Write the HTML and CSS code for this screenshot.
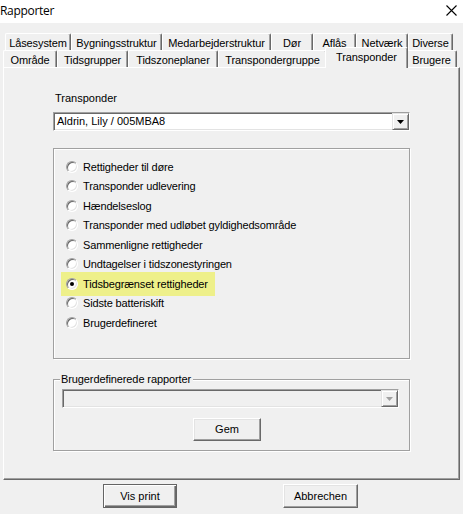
FILE: index.html
```html
<!DOCTYPE html>
<html lang="da">
<head>
<meta charset="utf-8">
<title>Rapporter</title>
<link rel="stylesheet" href="styles.css">
</head>
<body>
<div class="window">
  <div class="titlebar">
    <span class="title">Rapporter</span>
    <svg class="close" width="11" height="11" viewBox="0 0 11 11"><path d="M0.5 0.5 L10.5 10.5 M10.5 0.5 L0.5 10.5" stroke="#000" stroke-width="1.1" fill="none"/></svg>
  </div>
  <div class="tabs">
    <div class="tabrow row1">
      <div class="tab">Låsesystem</div>
      <div class="tab">Bygningsstruktur</div>
      <div class="tab">Medarbejderstruktur</div>
      <div class="tab">Dør</div>
      <div class="tab">Aflås</div>
      <div class="tab">Netværk</div>
      <div class="tab">Diverse</div>
    </div>
    <div class="tabrow row2">
      <div class="tab">Område</div>
      <div class="tab">Tidsgrupper</div>
      <div class="tab">Tidszoneplaner</div>
      <div class="tab">Transpondergruppe</div>
      <div class="tab active">Transponder</div>
      <div class="tab">Brugere</div>
    </div>
  </div>
  <div class="panel">
    <div class="label">Transponder</div>
    <div class="combo">
      <span class="combo-text">Aldrin, Lily / 005MBA8</span>
      <span class="combo-btn"><svg width="7" height="4" viewBox="0 0 7 4"><polygon points="0,0 7,0 3.5,4" fill="#000"/></svg></span>
    </div>
    <div class="group radios">
      <div class="radio-row"><span class="radio"></span><span>Rettigheder til døre</span></div>
      <div class="radio-row"><span class="radio"></span><span>Transponder udlevering</span></div>
      <div class="radio-row"><span class="radio"></span><span>Hændelseslog</span></div>
      <div class="radio-row"><span class="radio"></span><span>Transponder med udløbet gyldighedsområde</span></div>
      <div class="radio-row"><span class="radio"></span><span>Sammenligne rettigheder</span></div>
      <div class="radio-row"><span class="radio"></span><span>Undtagelser i tidszonestyringen</span></div>
      <div class="radio-row hl"><span class="radio"><span class="dot"></span></span><span>Tidsbegrænset rettigheder</span></div>
      <div class="radio-row"><span class="radio"></span><span>Sidste batteriskift</span></div>
      <div class="radio-row"><span class="radio"></span><span>Brugerdefineret</span></div>
    </div>
    <div class="group group2">
      <div class="legend">Brugerdefinerede rapporter</div>
      <div class="combo disabled">
        <span class="combo-text"></span>
        <span class="combo-btn"><svg width="7" height="4" viewBox="0 0 7 4"><polygon points="0,0 7,0 3.5,4" fill="#a0a0a0"/></svg></span>
      </div>
      <div class="btn gem">Gem</div>
    </div>
  </div>
  <div class="footer">
    <div class="btn default vis">Vis print</div>
    <div class="btn abb">Abbrechen</div>
  </div>
</div>
</body>
</html>
```
FILE: styles.css
```css
html, body {
  margin: 0;
  padding: 0;
}
body {
  background: #f0f0f0;
  font-family: "Liberation Sans", Arial, sans-serif;
  font-size: 11px;
  color: #000;
}
.window {
  width: 463px;
  height: 514px;
  overflow: hidden;
  display: flex;
  flex-direction: column;
}
.titlebar {
  height: 23px;
  background: #fff;
  display: flex;
  align-items: center;
  justify-content: space-between;
  padding: 0 6px 0 0;
  box-sizing: border-box;
  flex: none;
}
.title {
  font-family: "Open Sans", "Noto Sans", sans-serif;
  font-size: 12px;
  letter-spacing: -0.3px;
  line-height: 16px;
  margin-top: -2px;
}
.close {
  display: block;
  margin-top: -2px;
}
.tabs {
  margin-top: 10px;
  flex: none;
}
.tabrow {
  display: grid;
  height: 17px;
}
.row1 {
  padding-left: 5px;
  grid-template-columns: 66px 91px 109px 42px 43px 52px 45px;
}
.row2 {
  padding-left: 3px;
  grid-template-columns: 54px 71px 90px 109px 79px 51px;
}
.tab {
  box-sizing: border-box;
  height: 17px;
  display: flex;
  align-items: center;
  justify-content: center;
  white-space: nowrap;
  border-top: 1px solid #fff;
  border-left: 1px solid #fff;
  border-right: 1px solid #696969;
  box-shadow: inset -1px 0 0 #a0a0a0;
  border-radius: 2px 2px 0 0;
  background: #f0f0f0;
  padding-top: 1px;
  letter-spacing: -0.1px;
}
.tab.active {
  position: relative;
  z-index: 2;
  height: 21px;
  margin: -3px -2px 0 -2px;
  padding-top: 0;
  padding-bottom: 2px;
}
.panel {
  position: relative;
  z-index: 1;
  margin-left: 3px;
  width: 457px;
  height: 413px;
  box-sizing: border-box;
  border-top: 1px solid #fff;
  border-left: 1px solid #fff;
  border-right: 1px solid #696969;
  border-bottom: 1px solid #696969;
  box-shadow: inset -1px -1px 0 #a0a0a0;
  padding: 24px 0 0 49px;
  flex: none;
}
.label {
  line-height: 13px;
  height: 13px;
  padding-left: 2px;
}
.combo {
  margin-top: 7px;
  width: 357px;
  height: 19px;
  box-sizing: border-box;
  background: #fff;
  border: 1px solid;
  border-color: #a0a0a0 #fff #fff #a0a0a0;
  box-shadow: inset 1px 1px 0 #696969, inset -1px -1px 0 #e3e3e3;
  display: flex;
  align-items: center;
  padding: 0 1px 0 2px;
}
.combo-text {
  flex: 1;
  line-height: 13px;
  padding-left: 1px;
}
.combo-btn {
  width: 17px;
  height: 17px;
  box-sizing: border-box;
  background: #f0f0f0;
  border: 1px solid;
  border-color: #e3e3e3 #696969 #696969 #e3e3e3;
  box-shadow: inset 1px 1px 0 #fff, inset -1px -1px 0 #a0a0a0;
  display: flex;
  align-items: center;
  justify-content: center;
  padding-top: 1px;
  margin-right: -1px;
}
.combo-btn svg {
  display: block;
}
.group {
  width: 357px;
  box-sizing: border-box;
  border: 1px solid #a0a0a0;
  box-shadow: inset 1px 1px 0 #fff, 1px 1px 0 #fff;
}
.radios {
  margin-top: 17px;
  height: 211px;
  padding: 8px 0 0 12px;
}
.radio-row {
  height: 19.5px;
  display: flex;
  align-items: center;
  gap: 5px;
  white-space: nowrap;
  letter-spacing: -0.15px;
}
.radio-row.hl {
  background: #eef08a;
  width: 154px;
  box-sizing: border-box;
  margin: -2px 0 -2px -5px;
  padding: 2px 0 2px 5px;
  height: 23.5px;
}
.radio {
  width: 12px;
  height: 12px;
  box-sizing: border-box;
  border-radius: 50%;
  background: #fff;
  border: 1px solid;
  border-color: #a0a0a0 #fff #fff #a0a0a0;
  box-shadow: inset 1px 1px 0 #696969, inset -1px -1px 0 #e3e3e3;
  display: flex;
  align-items: center;
  justify-content: center;
  flex: none;
}
.dot {
  width: 4px;
  height: 4px;
  border-radius: 50%;
  background: #000;
}
.group2 {
  margin-top: 20px;
  height: 72px;
  padding: 0 10px 0 8px;
}
.legend {
  display: table;
  margin: -7px 0 0 -2px;
  padding: 0 2px 0 1px;
  background: #f0f0f0;
  line-height: 13px;
  letter-spacing: -0.1px;
}
.combo.disabled {
  margin-top: 3px;
  width: 337px;
  background: #f0f0f0;
}
.btn {
  box-sizing: border-box;
  background: #f0f0f0;
  border: 1px solid;
  border-color: #fff #696969 #696969 #fff;
  box-shadow: inset -1px -1px 0 #a0a0a0, inset 1px 1px 0 #e3e3e3;
  display: flex;
  align-items: center;
  justify-content: center;
  line-height: 13px;
}
.btn.default {
  border-color: #646464;
  box-shadow: inset 1px 1px 0 #fff, inset -1px -1px 0 #696969, inset -2px -2px 0 #a0a0a0;
}
.gem {
  margin: 10px 0 0 131px;
  width: 68px;
  height: 23px;
}
.footer {
  display: flex;
  padding: 4px 0 0 103px;
  gap: 106px;
  flex: none;
}
.vis {
  width: 74px;
  height: 24px;
}
.abb {
  width: 75px;
  height: 24px;
}
```
